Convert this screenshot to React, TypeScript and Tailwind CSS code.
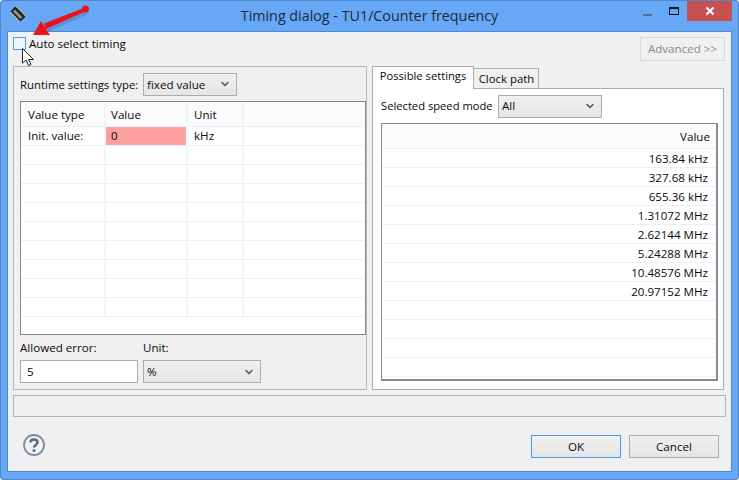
import { ChevronDown } from "lucide-react";

const valueRows = ["163.84 kHz", "327.68 kHz", "655.36 kHz", "1.31072 MHz", "2.62144 MHz", "5.24288 MHz", "10.48576 MHz", "20.97152 MHz", "", "", "", "", ""];

function Select({ label, className }: { label: string; className: string }) {
  return (
    <div className={`flex items-center justify-between border border-[#acacac] bg-gradient-to-b from-[#f0f0f0] to-[#e5e5e5] pl-[3px] pr-[5px] ${className}`}>
      <span>{label}</span>
      <ChevronDown size={12} strokeWidth={3} className="text-[#555]" />
    </div>
  );
}

function Cell({ className, children }: { className: string; children?: React.ReactNode }) {
  return <div className={`flex h-full shrink-0 items-center border-r-2 border-[#f0f5fc] ${className}`}>{children}</div>;
}

function Row({ type, value, unit, header }: { type?: string; value?: string; unit?: string; header?: boolean }) {
  return (
    <div className={`flex shrink-0 border-b border-[#e8f0fa] ${header ? "h-[25px] bg-[#fbfbfb] pt-[1px]" : "h-[19px]"}`}>
      <Cell className="w-[85px] pl-[7px]">{type}</Cell>
      <Cell className={`pl-[5px] ${value === "0" ? "mr-[2px] w-[80px] border-r-[#ffa0a0] bg-[#ffa0a0]" : "w-[82px]"}`}>{value}</Cell>
      <Cell className="w-[56px] pl-[6px]">{unit}</Cell>
    </div>
  );
}

export default function App() {
  return (
    <div className="relative flex h-[480px] w-[739px] flex-col overflow-hidden rounded-[3px] border border-[#4f86cc] bg-[#66a8f5] font-['Open_Sans','Noto_Sans',sans-serif] text-[11.6px] text-[#0a0a0a]">
      {/* title bar */}
      <div className="relative flex h-[30px] shrink-0 items-center justify-center text-[14.3px] text-[#1a2a3c]">
        <svg width="16" height="16" viewBox="0 0 18 18" className="absolute left-[9px] top-[5px]">
          <g transform="rotate(-45 9 9)">
            <rect x="5" y="1" width="8" height="16" rx="1" fill="#222" />
            <rect x="7" y="3" width="3" height="12" fill="#8d949b" />
            <path d="M3 3h2M3 6h2M3 9h2M3 12h2M3 15h2M13 3h2M13 6h2M13 9h2M13 12h2M13 15h2" stroke="#d8b83a" strokeWidth="1.2" />
          </g>
        </svg>
        <span>Timing dialog - TU1/Counter frequency</span>
        <div className="absolute right-[6px] top-0 flex h-[20px] items-start">
          <div className="flex h-[20px] w-[28px] items-center justify-center">
            <div className="mt-[7px] h-[2px] w-[9px] bg-[#4f6f96]" />
          </div>
          <div className="flex h-[20px] w-[26px] items-center justify-center">
            <div className="h-[8px] w-[10px] border border-t-2 border-[#111]" />
          </div>
          <div className="flex h-[20px] w-[45px] items-center justify-center bg-[#c75050] text-white">
            <svg width="10" height="10" viewBox="0 0 10 10">
              <path d="M1.5 1.5l7 7M8.5 1.5l-7 7" stroke="#fff" strokeWidth="2" />
            </svg>
          </div>
        </div>
      </div>

      {/* dialog body */}
      <div className="mx-[6px] flex h-[441px] shrink-0 flex-col border border-[#4f86cc] bg-[#f0f0f0] pl-[5px] pr-[4px]">
        <div className="flex h-[34px] shrink-0 items-start justify-between">
          <div className="mt-[5px] flex items-center">
            <div className="h-[13px] w-[13px] border border-[#4f9bf0] bg-[#eef5fd]" />
            <span className="ml-[3px] leading-[13px]">Auto select timing</span>
          </div>
          <div className="mr-[2px] mt-[5px] flex h-[24px] w-[85px] items-center justify-center border border-[#d9d9d9] text-[#8a8a8a]">Advanced &gt;&gt;</div>
        </div>

        <div className="flex h-[324px] shrink-0 gap-[4px]">
          {/* left group */}
          <div className="flex w-[354px] flex-col border border-[#b8b8b8] pl-[6px]">
            <div className="flex h-[34px] shrink-0 items-center">
              <span className="w-[123px] shrink-0 whitespace-nowrap pt-[1px] text-[11.4px]">Runtime settings type:</span>
              <Select label="fixed value" className="h-[23px] w-[94px] [&>span]:pt-[1px]" />
            </div>
            <div className="flex h-[234px] shrink-0 flex-col overflow-hidden border border-[#828790] bg-white">
              <Row header type="Value type" value="Value" unit="Unit" />
              <Row type="Init. value:" value="0" unit="kHz" />
              <Row />
              <Row />
              <Row />
              <Row />
              <Row />
              <Row />
              <Row />
              <Row />
              <Row />
            </div>
            <div className="mt-[6px] flex gap-[5px]">
              <div className="flex w-[118px] flex-col">
                <span className="h-[19px] leading-[14px]">Allowed error:</span>
                <div className="flex h-[23px] items-center border border-[#acacac] bg-white pl-[6px]">5</div>
              </div>
              <div className="flex w-[118px] flex-col">
                <span className="h-[19px] leading-[14px]">Unit:</span>
                <Select label="%" className="h-[23px]" />
              </div>
            </div>
          </div>

          {/* right tabs */}
          <div className="flex w-[353px] flex-col">
            <div className="flex h-[22px] shrink-0 items-end">
              <div className="relative z-10 mb-[-1px] ml-[1px] flex h-[23px] w-[102px] items-center justify-center border border-b-0 border-[#acacac] bg-white pb-[3px] text-[11.2px]">Possible settings</div>
              <div className="flex h-[20px] w-[65px] items-center justify-center border border-b-0 border-l-0 border-[#acacac] bg-[#f0f0f0] pl-[1px] text-[11.4px]">Clock path</div>
            </div>
            <div className="ml-[1px] flex flex-1 flex-col border border-[#acacac] bg-white pl-[8px] pr-[5px]">
              <div className="flex h-[34px] shrink-0 items-center">
                <span className="w-[117px] shrink-0 whitespace-nowrap text-[11.2px]">Selected speed mode</span>
                <Select label="All" className="h-[23px] w-[104px]" />
              </div>
              <div className="flex h-[258px] flex-col overflow-hidden border-2 border-l border-t border-[#8a8a92] bg-white">
                <div className="flex h-[25px] shrink-0 items-center justify-end border-b border-[#e8f0fa] bg-[#fbfbfb] pr-[6px] pt-[1px]">Value</div>
                {valueRows.map((v, i) => (
                  <div key={i} className="flex h-[19px] shrink-0 items-center justify-end border-b border-[#e8f0fa] pr-[8px] pt-[1px]">{v}</div>
                ))}
              </div>
            </div>
          </div>
        </div>

        <div className="mt-[5px] h-[22px] w-[713px] shrink-0 border border-[#b4b4b4]" />

        <div className="flex flex-1 items-start justify-between pl-[9px] pr-[8px]">
          <svg width="24" height="24" viewBox="0 0 24 24" className="mt-[16px]">
            <circle cx="12" cy="12" r="10" fill="#f0f2f6" stroke="#7d8ca3" strokeWidth="1.8" />
            <path d="M8.5 9.5c0-2 1.500-3 3.500-3s3.500 1.200 3.500 3c0 2.500-3.500 2.500-3.500 5" fill="none" stroke="#586a86" strokeWidth="2.400" />
            <circle cx="12" cy="17.500" r="1.500" fill="#586a86" />
          </svg>
          <div className="mt-[18px] flex gap-[8px]">
            <div className="flex h-[23px] w-[90px] items-center justify-center border border-[#4a9bf5] bg-gradient-to-b from-[#f0f0f0] to-[#e5e5e5]">OK</div>
            <div className="flex h-[23px] w-[90px] items-center justify-center border border-[#acacac] bg-gradient-to-b from-[#f0f0f0] to-[#e5e5e5]">Cancel</div>
          </div>
        </div>
      </div>

      {/* annotation arrow and cursor */}
      <svg width="90" height="70" viewBox="0 0 90 70" className="absolute left-[-1px] top-[-1px]">
        <path d="M87 13L48 30" stroke="#3d5f8c" strokeOpacity="0.3" strokeWidth="3" />
        <path d="M85 7.500L86.500 11L46 29L44 23.500Z" fill="#e8141c" />
        <circle cx="85.500" cy="9" r="3.500" fill="#e8141c" />
        <path d="M33 35L50 35L41 21Z" fill="#e8141c" />
        <path d="M22.500 48.500L22.500 63L26 60L28.500 65.500L31 64.500L28.500 59.500L33.500 59.500Z" fill="#fff" stroke="#222" strokeWidth="1" />
      </svg>
    </div>
  );
}
